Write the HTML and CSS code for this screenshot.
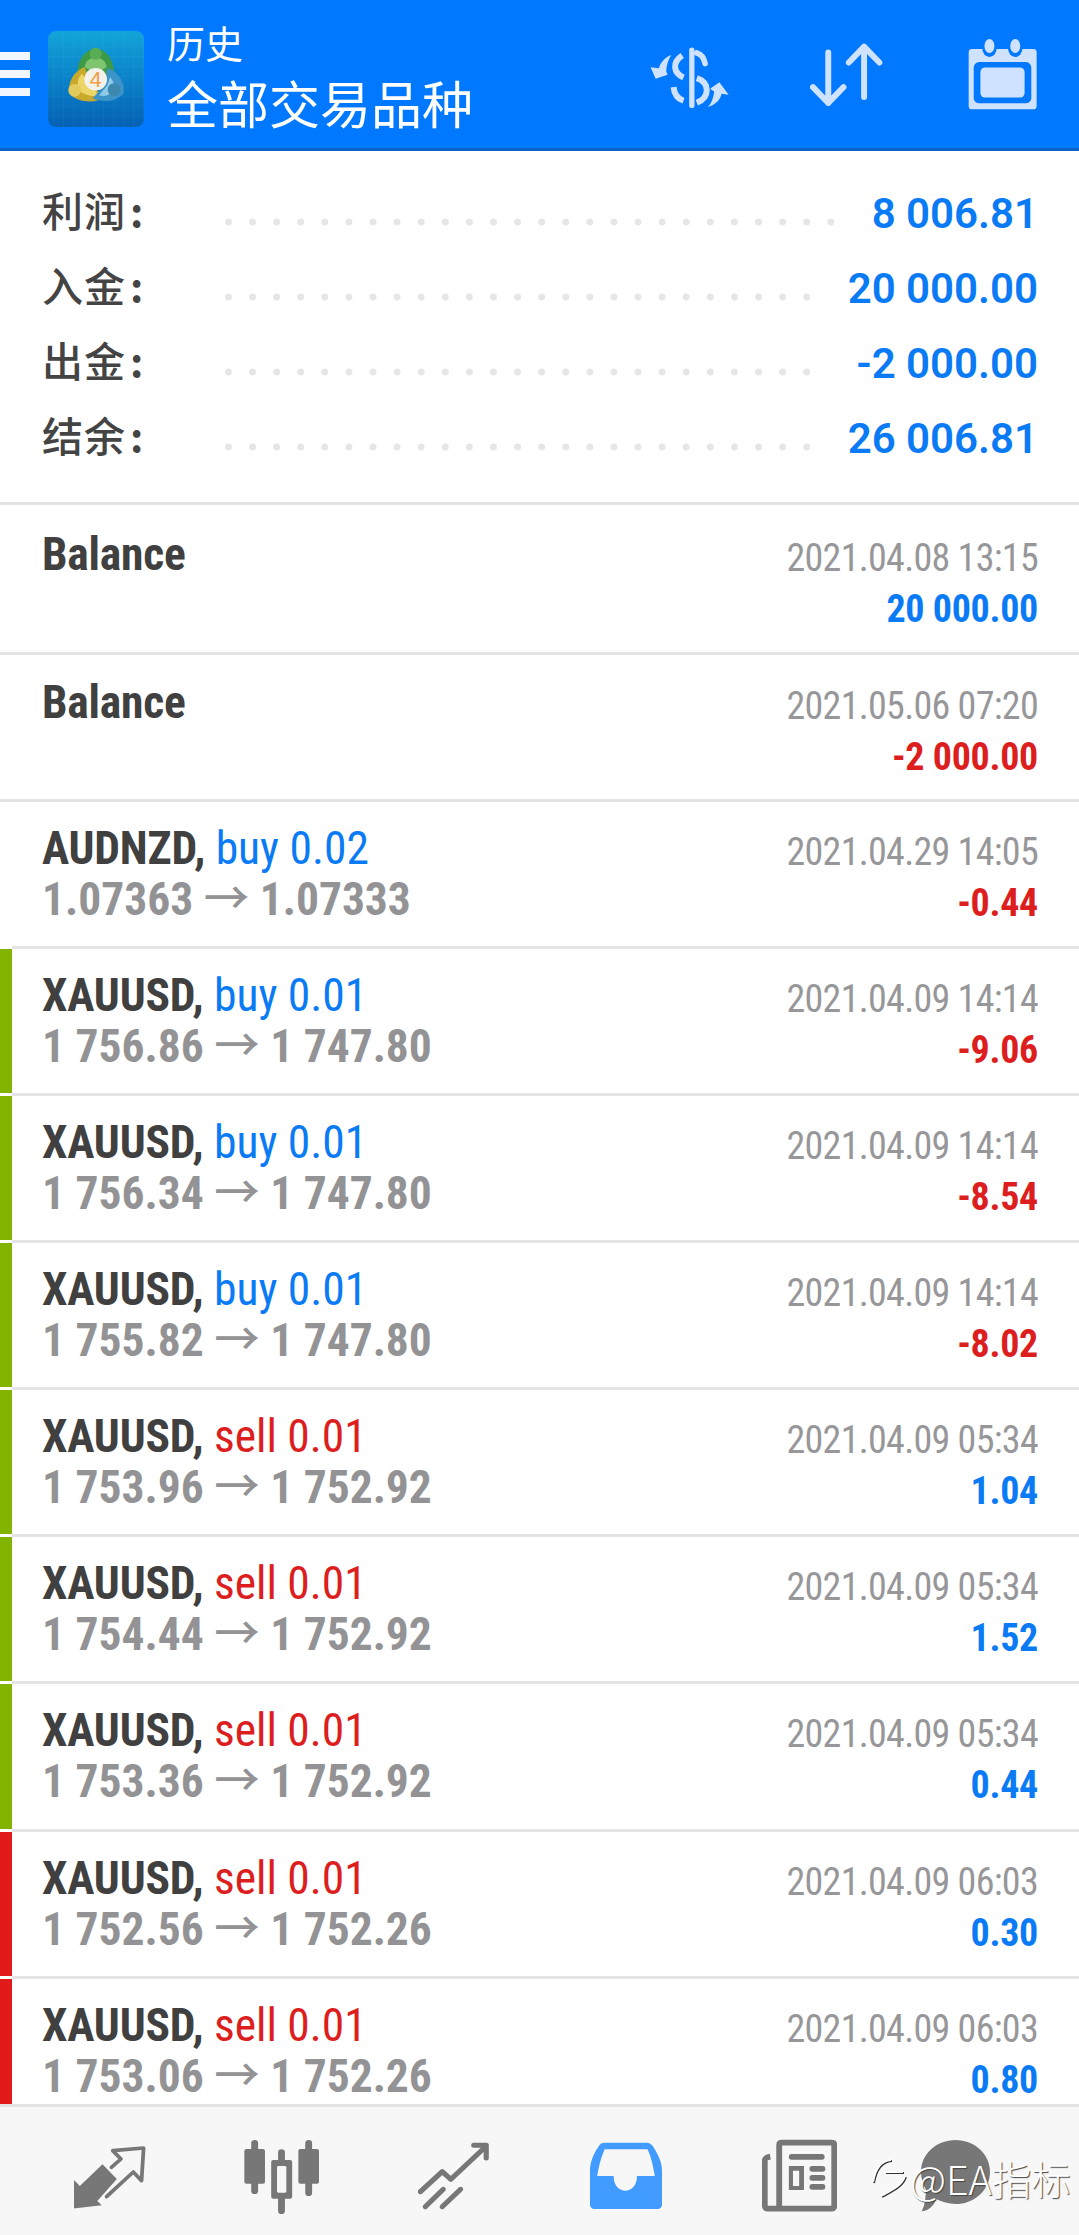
FILE: index.html
```html
<!DOCTYPE html>
<html>
<head>
    <title>历史</title>
    <link rel="stylesheet" href="styles.css">
</head>
<body>
    <header class="topbar">
        <div class="menu"><span></span><span></span><span></span></div>
        <svg class="logo" viewBox="12 12 288 288" width="96" height="96">
            <defs>
                <linearGradient id="logobg" x1="0" y1="0" x2="0" y2="1">
                    <stop offset="0" stop-color="#12a4d8"/>
                    <stop offset="0.55" stop-color="#0a7fc8"/>
                    <stop offset="1" stop-color="#0560b4"/>
                </linearGradient>
                <pattern id="logogrid" width="30" height="30" patternUnits="userSpaceOnUse">
                    <path d="M30 0V30H0" fill="none" stroke="#fff" stroke-opacity="0.07" stroke-width="2"/>
                </pattern>
            </defs>
            <rect x="12" y="12" width="288" height="288" rx="24" fill="url(#logobg)"/>
            <rect x="12" y="12" width="288" height="288" rx="24" fill="url(#logogrid)"/>
            <path d="M100 135C102 95 125 68 155 64 185 68 208 95 210 135L155 165z" fill="#3f9a48"/>
            <path d="M122 120C125 100 138 92 155 92 172 92 185 100 188 120L155 140z" fill="#7fc46f"/>
            <circle cx="155" cy="80" r="18" fill="#58ad55"/>
            <path d="M122 120C90 132 70 165 76 200 100 225 145 230 182 214L140 170z" fill="#c9a92c"/>
            <path d="M115 140C100 150 96 175 110 195 130 208 150 208 165 205L130 165z" fill="#ecd566"/>
            <circle cx="92" cy="190" r="19" fill="#e3ca5c"/>
            <path d="M190 122C225 135 245 170 238 200 215 225 175 228 146 214L185 170z" fill="#3c93c8"/>
            <path d="M198 150C212 165 214 185 202 198 190 208 175 208 165 205L190 175z" fill="#8fcbe8"/>
            <circle cx="210" cy="188" r="19" fill="#3d88ae"/>
            <circle cx="155" cy="157" r="34" fill="#f3f1ec"/>
            <text x="155" y="181" class="logo-four">4</text>
        </svg>
        <div class="titles">
            <div class="title-small">历史</div>
            <div class="title-big">全部交易品种</div>
        </div>
        <svg class="top-icon icon-money" viewBox="25 35 250 185" width="83" height="62">
            <path d="M157 44V210" class="stroke" stroke-width="16"/>
            <path d="M172 52C186 56 194 68 197 84" class="stroke" stroke-width="17"/>
            <path d="M128 60C98 80 100 112 132 126" class="line" stroke-width="18"/>
            <path d="M172 128C212 142 212 186 172 202" class="line" stroke-width="18"/>
            <path d="M102 155C104 176 114 190 132 196" class="line" stroke-width="18"/>
            <path d="M33 95L58 98C62 80 76 66 95 58 86 72 80 90 80 108L84 118 48 130z" class="fill"/>
            <path d="M268 178L240 140 212 160 224 168C222 190 215 205 205 215 230 208 245 190 246 175z" class="fill"/>
        </svg>
        <svg class="top-icon icon-sort" viewBox="620 130 235 205" width="78" height="68">
            <path d="M684 168V320M638 272L684 320 730 272" class="stroke" stroke-width="18"/>
            <path d="M792 302V150M746 198L792 150 838 198" class="stroke" stroke-width="18"/>
        </svg>
        <svg class="top-icon icon-date" viewBox="1100 125 212 218" width="71" height="73">
            <rect x="1105" y="158" width="203" height="180" rx="10" class="fill"/>
            <ellipse cx="1167" cy="152" rx="22" ry="30" fill="#0078ff"/>
            <ellipse cx="1244" cy="152" rx="22" ry="30" fill="#0078ff"/>
            <ellipse cx="1167" cy="149" rx="15" ry="21" class="fill"/>
            <ellipse cx="1244" cy="149" rx="15" ry="21" class="fill"/>
            <rect x="1120" y="197" width="172" height="123" rx="16" fill="#0078ff"/>
            <rect x="1140" y="213" width="132" height="90" rx="14" class="fill"/>
        </svg>
    </header>

    <section class="summary">
        <div class="sum-row"><span class="sum-label">利润<span class="colon">:</span></span><span class="dots"></span><span class="sum-value">8 006.81</span></div>
        <div class="sum-row"><span class="sum-label">入金<span class="colon">:</span></span><span class="dots"></span><span class="sum-value">20 000.00</span></div>
        <div class="sum-row"><span class="sum-label">出金<span class="colon">:</span></span><span class="dots"></span><span class="sum-value">-2 000.00</span></div>
        <div class="sum-row"><span class="sum-label">结余<span class="colon">:</span></span><span class="dots"></span><span class="sum-value">26 006.81</span></div>
    </section>

    <main class="list">
        <div class="row first">
            <div class="bar"></div>
            <div class="row-body">
                <div class="left"><div class="deal"><b>Balance</b></div></div>
                <div class="right"><div class="date">2021.04.08 13:15</div><div class="amount up">20 000.00</div></div>
            </div>
        </div>
        <div class="row second">
            <div class="bar"></div>
            <div class="row-body">
                <div class="left"><div class="deal"><b>Balance</b></div></div>
                <div class="right"><div class="date">2021.05.06 07:20</div><div class="amount down">-2 000.00</div></div>
            </div>
        </div>
        <div class="row">
            <div class="bar"></div>
            <div class="row-body">
                <div class="left"><div class="deal"><b>AUDNZD,</b> <span class="buy">buy 0.02</span></div><div class="price">1.07363 <span class="arrow">→</span> 1.07333</div></div>
                <div class="right"><div class="date">2021.04.29 14:05</div><div class="amount down">-0.44</div></div>
            </div>
        </div>
        <div class="row">
            <div class="bar green"></div>
            <div class="row-body">
                <div class="left"><div class="deal"><b>XAUUSD,</b> <span class="buy">buy 0.01</span></div><div class="price">1 756.86 <span class="arrow">→</span> 1 747.80</div></div>
                <div class="right"><div class="date">2021.04.09 14:14</div><div class="amount down">-9.06</div></div>
            </div>
        </div>
        <div class="row">
            <div class="bar green"></div>
            <div class="row-body">
                <div class="left"><div class="deal"><b>XAUUSD,</b> <span class="buy">buy 0.01</span></div><div class="price">1 756.34 <span class="arrow">→</span> 1 747.80</div></div>
                <div class="right"><div class="date">2021.04.09 14:14</div><div class="amount down">-8.54</div></div>
            </div>
        </div>
        <div class="row">
            <div class="bar green"></div>
            <div class="row-body">
                <div class="left"><div class="deal"><b>XAUUSD,</b> <span class="buy">buy 0.01</span></div><div class="price">1 755.82 <span class="arrow">→</span> 1 747.80</div></div>
                <div class="right"><div class="date">2021.04.09 14:14</div><div class="amount down">-8.02</div></div>
            </div>
        </div>
        <div class="row">
            <div class="bar green"></div>
            <div class="row-body">
                <div class="left"><div class="deal"><b>XAUUSD,</b> <span class="sell">sell 0.01</span></div><div class="price">1 753.96 <span class="arrow">→</span> 1 752.92</div></div>
                <div class="right"><div class="date">2021.04.09 05:34</div><div class="amount up">1.04</div></div>
            </div>
        </div>
        <div class="row">
            <div class="bar green"></div>
            <div class="row-body">
                <div class="left"><div class="deal"><b>XAUUSD,</b> <span class="sell">sell 0.01</span></div><div class="price">1 754.44 <span class="arrow">→</span> 1 752.92</div></div>
                <div class="right"><div class="date">2021.04.09 05:34</div><div class="amount up">1.52</div></div>
            </div>
        </div>
        <div class="row">
            <div class="bar green"></div>
            <div class="row-body">
                <div class="left"><div class="deal"><b>XAUUSD,</b> <span class="sell">sell 0.01</span></div><div class="price">1 753.36 <span class="arrow">→</span> 1 752.92</div></div>
                <div class="right"><div class="date">2021.04.09 05:34</div><div class="amount up">0.44</div></div>
            </div>
        </div>
        <div class="row">
            <div class="bar red"></div>
            <div class="row-body">
                <div class="left"><div class="deal"><b>XAUUSD,</b> <span class="sell">sell 0.01</span></div><div class="price">1 752.56 <span class="arrow">→</span> 1 752.26</div></div>
                <div class="right"><div class="date">2021.04.09 06:03</div><div class="amount up">0.30</div></div>
            </div>
        </div>
        <div class="row">
            <div class="bar red"></div>
            <div class="row-body">
                <div class="left"><div class="deal"><b>XAUUSD,</b> <span class="sell">sell 0.01</span></div><div class="price">1 753.06 <span class="arrow">→</span> 1 752.26</div></div>
                <div class="right"><div class="date">2021.04.09 06:03</div><div class="amount up">0.80</div></div>
            </div>
        </div>
    </main>

    <footer class="tabs">
        <svg class="tab tab-trade" viewBox="215 81 210 384" width="72" height="128" preserveAspectRatio="none">
            <path d="M215 300V385H220L296 376 283 363 340 297 298 253 232 318z" class="tab-fill"/>
            <path d="M324 262L352 237 328 212 418 204 412 302 388 276 310 350" class="tab-line" stroke-width="11" stroke-linecap="butt"/>
        </svg>
        <svg class="tab tab-charts" viewBox="708 81 218 384" width="75" height="128" preserveAspectRatio="none">
            <path d="M739 190V332M817 218V392M896 190V338" class="tab-line" stroke-width="20"/>
            <rect x="709" y="207" width="60" height="104" rx="6" class="tab-fill"/>
            <rect x="866" y="207" width="60" height="104" rx="6" class="tab-fill"/>
            <rect x="787" y="240" width="61" height="116" rx="6" class="tab-fill"/>
            <rect x="804" y="258" width="27" height="80" rx="4" fill="#f7f7f7"/>
        </svg>
        <svg class="tab tab-trend" viewBox="1215 81 205 384" width="71" height="128" preserveAspectRatio="none">
            <path d="M1222 335L1285 275 1310 298 1410 200M1376 196H1412V234" class="tab-line" stroke-width="15"/>
            <path d="M1236 380L1288 328M1285 380L1338 328" class="tab-line" stroke-width="15"/>
        </svg>
        <svg class="tab tab-history" viewBox="147 81 210 384" width="72" height="128" preserveAspectRatio="none">
            <path d="M147 270C147 245 160 215 175 195 178 190 184 188 190 188H312C320 188 326 192 330 198 345 222 357 245 357 272V375C357 381 351 387 345 387H159C153 387 147 381 147 375z" fill="#429cff"/>
            <path d="M190 208H315C325 230 332 262 336 288H284C284 320 266 332 250 332 234 332 216 320 216 288H168C172 262 180 230 190 208z" fill="#f7f7f7"/>
        </svg>
        <svg class="tab tab-news" viewBox="648 81 218 384" width="75" height="128" preserveAspectRatio="none">
            <path d="M692 386H664C656 386 656 380 656 372V244C656 236 660 232 672 230M692 386H850C856 386 858 382 858 378V194C858 190 856 188 850 188H706C700 188 698 190 698 194V386" fill="none" stroke="#777" stroke-width="17" stroke-linejoin="round"/>
            <rect x="726" y="222" width="104" height="17" rx="8" class="tab-fill"/>
            <path d="M726 258H770V330H726zM738 272V318H756V272z" class="tab-fill" fill-rule="evenodd"/>
            <rect x="786" y="258" width="46" height="17" rx="8" class="tab-fill"/>
            <rect x="786" y="285" width="46" height="17" rx="8" class="tab-fill"/>
            <rect x="786" y="312" width="46" height="17" rx="8" class="tab-fill"/>
        </svg>
        <svg class="tab tab-chat" viewBox="1110 81 200 384" width="69" height="128" preserveAspectRatio="none">
            <path d="M1210 180C1265 180 1310 222 1310 275 1310 330 1265 372 1210 372 1190 372 1170 366 1155 358 1145 380 1130 393 1112 394 1122 375 1124 350 1124 328 1115 312 1110 295 1110 275 1110 222 1155 180 1210 180z" class="tab-fill"/>
        </svg>
        <div class="watermark">
            <svg class="wm-icon" viewBox="0 0 34 40" width="34" height="40">
                <path d="M1 24C3 12 8 3 19 2M13 14H31M33 18C30 28 18 33 9 38" fill="none" stroke="#fff" stroke-width="2"/>
            </svg>
            <span>@EA指标</span>
        </div>
    </footer>
</body>
</html>
```

FILE: styles.css
```css
* {
    box-sizing: border-box;
}
html, body {
    margin: 0;
    height: 2235px;
}
body {
    display: flex;
    flex-direction: column;
    overflow: hidden;
    background-color: #fff;
    font-family: Roboto, "Noto Sans CJK SC", sans-serif;
}

/* top bar */
.topbar {
    height: 151px;
    flex: none;
    display: flex;
    align-items: center;
    background-color: #0078ff;
    border-bottom: 3px solid #0c63c6;
    color: #fff;
}
.menu {
    width: 30px;
    flex: none;
    display: flex;
    flex-direction: column;
    gap: 10px;
    margin-right: 18px;
}
.menu span {
    height: 8px;
    background-color: #f2f7ff;
}
.logo {
    flex: none;
    margin-top: 10px;
}
.logo-four {
    font-family: "Liberation Sans", sans-serif;
    font-size: 64px;
    text-anchor: middle;
    fill: #f0a040;
}
.titles {
    width: 481px;
    flex: none;
    align-self: flex-start;
    margin-left: 23px;
    padding-top: 20px;
    font-family: "Noto Sans CJK SC", sans-serif;
    white-space: nowrap;
}
.title-small {
    font-size: 38px;
    line-height: 44px;
}
.title-big {
    margin-top: 8px;
    font-size: 51px;
    line-height: 60px;
}
.top-icon {
    flex: none;
}
.top-icon .stroke, .top-icon .line {
    fill: none;
    stroke: #cfe2ff;
    stroke-linecap: round;
    stroke-linejoin: round;
}
.top-icon .line {
    stroke-linecap: butt;
}
.top-icon .fill {
    fill: #cfe2ff;
}
.icon-money {
    margin-top: 7px;
}
.icon-sort {
    margin-left: 76px;
}
.icon-date {
    margin-left: 82px;
}

/* summary */
.summary {
    flex: none;
    height: 351px;
    padding: 24px 41px 0 42px;
}
.sum-row {
    height: 75px;
    display: flex;
    align-items: center;
}
.sum-label {
    width: 183px;
    flex: none;
    margin-top: -8px;
    font-family: "Noto Sans CJK SC", sans-serif;
    font-size: 41px;
    letter-spacing: 1px;
    font-weight: 500;
    color: #444;
}
.colon {
    margin-left: 4px;
    font-weight: 700;
}
.dots {
    flex: 1;
    height: 8px;
    margin: 18px 36px 0 0;
    background-image: radial-gradient(circle at 3.5px 4px, #e6e6e6 3.2px, transparent 3.8px);
    background-size: 24.1px 8px;
    background-repeat: repeat-x;
}
.sum-value {
    flex: none;
    margin-top: 2px;
    font-size: 42px;
    font-weight: 600;
    color: #0a7bf5;
}

/* deals */
.list {
    flex: 1;
    overflow: hidden;
}
.row {
    height: 147.1px;
    display: flex;
}
.row.first {
    height: 150px;
}
.row.second {
    height: 146.9px;
}
.bar {
    width: 12px;
    flex: none;
    border-top: 3px solid #e4e4e4;
}
.bar.green {
    background-color: #82b300;
    border-top-color: #fff;
}
.bar.red {
    background-color: #e31a1a;
    border-top-color: #fff;
}
.row-body {
    flex: 1;
    display: flex;
    justify-content: space-between;
    border-top: 3px solid #e4e4e4;
    padding: 0 41px 0 30px;
}
.first .row-body {
    padding-top: 3px;
}
.second .row-body {
    padding-top: 1px;
}
.deal, .price {
    font-size: 45.5px;
    font-stretch: condensed;
    white-space: nowrap;
    line-height: 51px;
}
.deal {
    margin-top: 21px;
    color: #0a7bf5;
}
.deal b {
    letter-spacing: -0.2px;
    color: #404040;
}
.deal .sell {
    color: #dc1e1e;
}
.price {
    font-weight: 700;
    color: #939396;
}
.arrow {
    font-weight: 500;
}
.right {
    text-align: right;
}
.date {
    margin-top: 27px;
    font-size: 38px;
    letter-spacing: -0.7px;
    font-stretch: condensed;
    line-height: 46px;
    color: #97979a;
}
.amount {
    margin-top: 5px;
    font-size: 38px;
    letter-spacing: -0.3px;
    font-stretch: condensed;
    font-weight: 700;
    line-height: 46px;
}
.up {
    color: #0a7bf5;
}
.down {
    color: #dc1e1e;
}

/* bottom tabs */
.tabs {
    position: relative;
    flex: none;
    height: 131px;
    display: flex;
    padding-left: 74px;
    background-color: #f7f7f7;
    border-top: 3px solid #e4e4e4;
}
.tab {
    flex: none;
}
.tab-fill {
    fill: #777;
}
.tab-line {
    fill: none;
    stroke: #777;
    stroke-linecap: round;
    stroke-linejoin: round;
}
.tab-charts {
    margin-left: 98px;
}
.tab-trend {
    margin-left: 99px;
}
.tab-history {
    margin-left: 101px;
}
.tab-news {
    margin-left: 100px;
}
.tab-chat {
    margin-left: 84px;
}
.watermark {
    position: absolute;
    left: 872px;
    top: 50px;
    display: flex;
    align-items: center;
    gap: 4px;
    font-family: "Noto Sans CJK SC", sans-serif;
    font-size: 39.5px;
    font-weight: 300;
    line-height: 42px;
    color: #fff;
    text-shadow: 1px 1px 1px #444;
}
.wm-icon {
    flex: none;
    filter: drop-shadow(1px 1px 0 #333);
}
```
